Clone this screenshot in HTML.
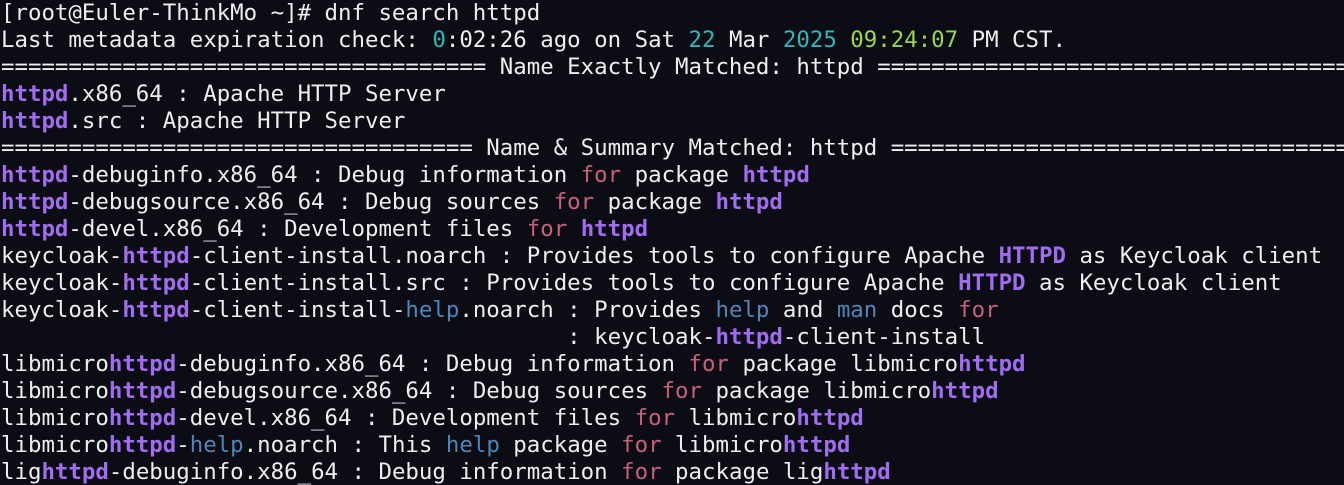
<!DOCTYPE html>
<html><head><meta charset="utf-8"><style>
html,body{margin:0;padding:0;background:#0c0c14;width:1344px;height:485px;overflow:hidden}
pre{margin:0;padding:0 0 0 1px;font-family:"DejaVu Sans Mono","Liberation Mono",monospace;font-size:22.4px;line-height:27px;color:#eeeeee;letter-spacing:0}
.h{color:#a06cf0;font-weight:bold}
.b{color:#4f86b8}
.r{color:#c8607a}
.c{color:#2fb8b8}
.g{color:#98d84c}
</style></head><body><pre>[root@Euler-ThinkMo ~]# dnf search httpd
Last metadata expiration check: <span class="c">0</span>:02:26 ago on Sat <span class="c">22</span> Mar <span class="c">2025</span> <span class="g">09:24:07</span> PM CST.
==================================== Name Exactly Matched: httpd ====================================
<span class="h">httpd</span>.x86_64 : Apache HTTP Server
<span class="h">httpd</span>.src : Apache HTTP Server
=================================== Name &amp; Summary Matched: httpd ===================================
<span class="h">httpd</span>-debuginfo.x86_64 : Debug information <span class="r">for</span> package <span class="h">httpd</span>
<span class="h">httpd</span>-debugsource.x86_64 : Debug sources <span class="r">for</span> package <span class="h">httpd</span>
<span class="h">httpd</span>-devel.x86_64 : Development files <span class="r">for</span> <span class="h">httpd</span>
keycloak-<span class="h">httpd</span>-client-install.noarch : Provides tools to configure Apache <span class="h">HTTPD</span> as Keycloak client
keycloak-<span class="h">httpd</span>-client-install.src : Provides tools to configure Apache <span class="h">HTTPD</span> as Keycloak client
keycloak-<span class="h">httpd</span>-client-install-<span class="b">help</span>.noarch : Provides <span class="b">help</span> and <span class="b">man</span> docs <span class="r">for</span>
                                          : keycloak-<span class="h">httpd</span>-client-install
libmicro<span class="h">httpd</span>-debuginfo.x86_64 : Debug information <span class="r">for</span> package libmicro<span class="h">httpd</span>
libmicro<span class="h">httpd</span>-debugsource.x86_64 : Debug sources <span class="r">for</span> package libmicro<span class="h">httpd</span>
libmicro<span class="h">httpd</span>-devel.x86_64 : Development files <span class="r">for</span> libmicro<span class="h">httpd</span>
libmicro<span class="h">httpd</span>-<span class="b">help</span>.noarch : This <span class="b">help</span> package <span class="r">for</span> libmicro<span class="h">httpd</span>
lig<span class="h">httpd</span>-debuginfo.x86_64 : Debug information <span class="r">for</span> package lig<span class="h">httpd</span>
</pre></body></html>
